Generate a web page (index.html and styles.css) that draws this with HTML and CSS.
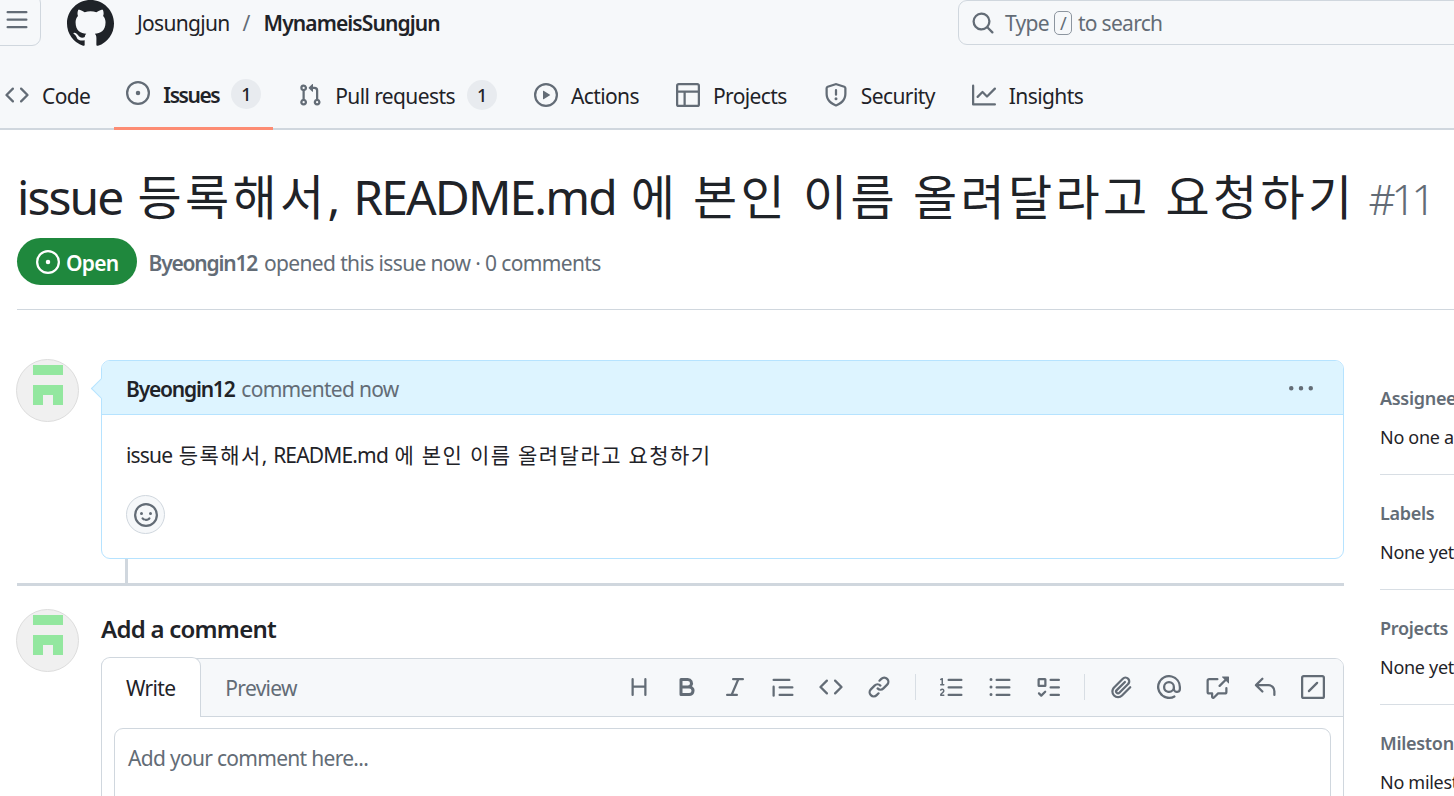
FILE: index.html
```html
<!DOCTYPE html>
<html lang="ko">
<head>
    <meta charset="UTF-8">
    <title>issue 등록해서, README.md 에 본인 이름 올려달라고 요청하기 #11</title>
    <link rel="stylesheet" href="styles.css">
</head>
<body>
    <svg class="sprite" xmlns="http://www.w3.org/2000/svg">
        <symbol id="i-bars" viewBox="0 0 16 16"><path d="M1 2.75A.75.75 0 0 1 1.75 2h12.5a.75.75 0 0 1 0 1.5H1.75A.75.75 0 0 1 1 2.75Zm0 5A.75.75 0 0 1 1.75 7h12.5a.75.75 0 0 1 0 1.5H1.75A.75.75 0 0 1 1 7.75ZM1.75 12h12.5a.75.75 0 0 1 0 1.5H1.75a.75.75 0 0 1 0-1.5Z"/></symbol>
        <symbol id="i-github" viewBox="0 0 16 16"><path d="M8 0c4.42 0 8 3.58 8 8a8.013 8.013 0 0 1-5.45 7.59c-.4.08-.55-.17-.55-.38 0-.27.01-1.13.01-2.2 0-.75-.25-1.23-.54-1.48 1.78-.2 3.65-.88 3.65-3.95 0-.88-.31-1.59-.82-2.15.08-.2.36-1.02-.08-2.12 0 0-.67-.22-2.2.82-.64-.18-1.32-.27-2-.27-.68 0-1.36.09-2 .27-1.53-1.03-2.2-.82-2.2-.82-.44 1.1-.16 1.92-.08 2.12-.51.56-.82 1.28-.82 2.15 0 3.06 1.86 3.75 3.64 3.95-.23.2-.44.55-.51 1.07-.46.21-1.61.55-2.33-.66-.15-.24-.6-.83-1.23-.82-.67.01-.27.38.01.53.34.19.73.9.82 1.13.16.45.68 1.31 2.69.94 0 .67.01 1.3.01 1.49 0 .21-.15.45-.55.38A7.995 7.995 0 0 1 0 8c0-4.42 3.58-8 8-8Z"/></symbol>
        <symbol id="i-search" viewBox="0 0 16 16"><path d="M10.68 11.74a6 6 0 0 1-7.922-8.982 6 6 0 0 1 8.982 7.922l3.04 3.04a.749.749 0 0 1-.326 1.275.749.749 0 0 1-.734-.215ZM11.5 7a4.499 4.499 0 1 0-8.997 0A4.499 4.499 0 0 0 11.5 7Z"/></symbol>
        <symbol id="i-code" viewBox="0 0 16 16"><path d="m11.28 3.22 4.25 4.25a.75.75 0 0 1 0 1.06l-4.25 4.25a.749.749 0 0 1-1.275-.326.749.749 0 0 1 .215-.734L13.94 8l-3.72-3.72a.749.749 0 0 1 .326-1.275.749.749 0 0 1 .734.215Zm-6.56 0a.751.751 0 0 1 1.042.018.751.751 0 0 1 .018 1.042L2.06 8l3.72 3.72a.749.749 0 0 1-.326 1.275.749.749 0 0 1-.734-.215L.47 8.53a.75.75 0 0 1 0-1.06Z"/></symbol>
        <symbol id="i-issue" viewBox="0 0 16 16"><path d="M8 9.5a1.5 1.5 0 1 0 0-3 1.5 1.5 0 0 0 0 3Z"/><path d="M8 0a8 8 0 1 1 0 16A8 8 0 0 1 8 0ZM1.5 8a6.5 6.5 0 1 0 13 0 6.5 6.5 0 0 0-13 0Z"/></symbol>
        <symbol id="i-pull" viewBox="0 0 16 16"><path d="M1.5 3.25a2.25 2.25 0 1 1 3 2.122v5.256a2.251 2.251 0 1 1-1.5 0V5.372A2.25 2.25 0 0 1 1.5 3.25Zm5.677-.177L9.573.677A.25.25 0 0 1 10 .854V2.5h1A2.5 2.5 0 0 1 13.5 5v5.628a2.251 2.251 0 1 1-1.5 0V5a1 1 0 0 0-1-1h-1v1.646a.25.25 0 0 1-.427.177L7.177 3.427a.25.25 0 0 1 0-.354ZM3.75 2.5a.75.75 0 1 0 0 1.5.75.75 0 0 0 0-1.5Zm0 9.5a.75.75 0 1 0 0 1.5.75.75 0 0 0 0-1.5Zm8.25.75a.75.75 0 1 0 1.5 0 .75.75 0 0 0-1.5 0Z"/></symbol>
        <symbol id="i-play" viewBox="0 0 16 16"><path d="M8 0a8 8 0 1 1 0 16A8 8 0 0 1 8 0ZM1.5 8a6.5 6.5 0 1 0 13 0 6.5 6.5 0 0 0-13 0Zm4.879-2.773 4.264 2.559a.25.25 0 0 1 0 .428l-4.264 2.559A.25.25 0 0 1 6 10.559V5.442a.25.25 0 0 1 .379-.215Z"/></symbol>
        <symbol id="i-table" viewBox="0 0 16 16"><path d="M0 1.75C0 .784.784 0 1.75 0h12.5C15.216 0 16 .784 16 1.75v12.5A1.75 1.75 0 0 1 14.25 16H1.75A1.75 1.75 0 0 1 0 14.25ZM6.5 6.5v8h7.75a.25.25 0 0 0 .25-.25V6.5Zm8-1.5V1.75a.25.25 0 0 0-.25-.25H1.75a.25.25 0 0 0-.25.25V5Zm-13 1.5v7.75c0 .138.112.25.25.25H5v-8Z"/></symbol>
        <symbol id="i-shield" viewBox="0 0 16 16"><path d="M7.467.133a1.748 1.748 0 0 1 1.066 0l5.25 1.68A1.75 1.75 0 0 1 15 3.48V7c0 1.566-.32 3.182-1.303 4.682-.983 1.498-2.585 2.813-5.032 3.855a1.697 1.697 0 0 1-1.33 0c-2.447-1.042-4.049-2.357-5.032-3.855C1.32 10.182 1 8.566 1 7V3.48a1.75 1.75 0 0 1 1.217-1.667Zm.61 1.429a.25.25 0 0 0-.153 0l-5.25 1.68a.25.25 0 0 0-.174.238V7c0 1.358.275 2.666 1.057 3.86.784 1.194 2.121 2.34 4.366 3.297a.196.196 0 0 0 .154 0c2.245-.956 3.582-2.104 4.366-3.298C13.225 9.666 13.5 8.36 13.5 7V3.48a.25.25 0 0 0-.174-.237l-5.25-1.68ZM8.75 4.75v3a.75.75 0 0 1-1.5 0v-3a.75.75 0 0 1 1.5 0ZM9 10.5a1 1 0 1 1-2 0 1 1 0 0 1 2 0Z"/></symbol>
        <symbol id="i-graph" viewBox="0 0 16 16"><path d="M1.5 1.75V13.5h13.75a.75.75 0 0 1 0 1.5H.75a.75.75 0 0 1-.75-.75V1.75a.75.75 0 0 1 1.5 0Zm14.28 2.53-5.25 5.25a.75.75 0 0 1-1.06 0L7 7.06 4.28 9.78a.751.751 0 0 1-1.042-.018.751.751 0 0 1-.018-1.042l3.25-3.25a.75.75 0 0 1 1.06 0L10 7.94l4.72-4.72a.751.751 0 0 1 1.042.018.751.751 0 0 1 .018 1.042Z"/></symbol>
        <symbol id="i-kebab" viewBox="0 0 16 16"><path d="M8 9a1.5 1.5 0 1 0 0-3 1.5 1.5 0 0 0 0 3ZM1.5 9a1.5 1.5 0 1 0 0-3 1.5 1.5 0 0 0 0 3Zm13 0a1.5 1.5 0 1 0 0-3 1.5 1.5 0 0 0 0 3Z"/></symbol>
        <symbol id="i-smiley" viewBox="0 0 16 16"><path d="M8 0a8 8 0 1 1 0 16A8 8 0 0 1 8 0ZM1.5 8a6.5 6.5 0 1 0 13 0 6.5 6.5 0 0 0-13 0Zm3.82 1.636a.75.75 0 0 1 1.038.175l.007.009c.103.118.22.222.35.31.264.178.683.37 1.285.37.602 0 1.02-.192 1.285-.371.13-.088.247-.192.35-.31l.007-.008a.75.75 0 0 1 1.222.87l-.022-.015c.02.013.021.015.021.015v.001l-.001.002-.002.003-.005.007-.014.019a2.066 2.066 0 0 1-.184.213c-.16.166-.338.316-.53.445-.63.418-1.37.638-2.127.629-.946 0-1.652-.308-2.126-.63a3.331 3.331 0 0 1-.715-.657l-.014-.02-.005-.006-.002-.003v-.002h-.001l.613-.432-.614.43a.75.75 0 0 1 .183-1.044ZM12 7a1 1 0 1 1-2 0 1 1 0 0 1 2 0ZM5 8a1 1 0 1 1 0-2 1 1 0 0 1 0 2Zm5.25 2.25.592.416a97.71 97.71 0 0 0-.592-.416Z"/></symbol>
        <symbol id="i-heading" viewBox="0 0 16 16"><path d="M3.75 2a.75.75 0 0 1 .75.75V7h7V2.75a.75.75 0 0 1 1.5 0v10.5a.75.75 0 0 1-1.5 0V8.5h-7v4.75a.75.75 0 0 1-1.5 0V2.75A.75.75 0 0 1 3.75 2Z"/></symbol>
        <symbol id="i-bold" viewBox="0 0 16 16"><path d="M4 2h4.5a3.501 3.501 0 0 1 2.852 5.53A3.499 3.499 0 0 1 9.5 14H4a1 1 0 0 1-1-1V3a1 1 0 0 1 1-1Zm1 7v3h4.5a1.5 1.5 0 0 0 0-3Zm3.5-2a1.5 1.5 0 0 0 0-3H5v3Z"/></symbol>
        <symbol id="i-italic" viewBox="0 0 16 16"><path d="M6 2.75A.75.75 0 0 1 6.75 2h6.5a.75.75 0 0 1 0 1.5h-2.505l-3.858 9H9.25a.75.75 0 0 1 0 1.5h-6.5a.75.75 0 0 1 0-1.5h2.505l3.858-9H6.75A.75.75 0 0 1 6 2.75Z"/></symbol>
        <symbol id="i-quote" viewBox="0 0 16 16"><path d="M1.75 2.5h10.5a.75.75 0 0 1 0 1.5H1.75a.75.75 0 0 1 0-1.5Zm4 5h8.5a.75.75 0 0 1 0 1.5h-8.5a.75.75 0 0 1 0-1.5Zm0 5h8.5a.75.75 0 0 1 0 1.5h-8.5a.75.75 0 0 1 0-1.5ZM2.5 7.75v6a.75.75 0 0 1-1.5 0v-6a.75.75 0 0 1 1.5 0Z"/></symbol>
        <symbol id="i-link" viewBox="0 0 16 16"><path d="m7.775 3.275 1.25-1.25a3.5 3.5 0 1 1 4.95 4.95l-2.5 2.5a3.5 3.5 0 0 1-4.95 0 .751.751 0 0 1 .018-1.042.751.751 0 0 1 1.042-.018 1.998 1.998 0 0 0 2.83 0l2.5-2.5a2.002 2.002 0 0 0-2.83-2.83l-1.25 1.25a.751.751 0 0 1-1.042-.018.751.751 0 0 1-.018-1.042Zm-4.69 9.64a1.998 1.998 0 0 0 2.83 0l1.25-1.25a.751.751 0 0 1 1.042.018.751.751 0 0 1 .018 1.042l-1.25 1.25a3.5 3.5 0 1 1-4.95-4.95l2.5-2.5a3.5 3.5 0 0 1 4.95 0 .751.751 0 0 1-.018 1.042.751.751 0 0 1-1.042.018 1.998 1.998 0 0 0-2.83 0l-2.5 2.5a1.998 1.998 0 0 0 0 2.83Z"/></symbol>
        <symbol id="i-ol" viewBox="0 0 16 16"><path d="M5 3.25a.75.75 0 0 1 .75-.75h8.5a.75.75 0 0 1 0 1.5h-8.5A.75.75 0 0 1 5 3.25Zm0 5a.75.75 0 0 1 .75-.75h8.5a.75.75 0 0 1 0 1.5h-8.5A.75.75 0 0 1 5 8.25Zm0 5a.75.75 0 0 1 .75-.75h8.5a.75.75 0 0 1 0 1.5h-8.5a.75.75 0 0 1-.75-.75ZM.924 10.32a.5.5 0 0 1-.851-.525l.001-.001.001-.002.002-.004.007-.011c.097-.144.215-.273.348-.384.228-.19.588-.392 1.068-.392.468 0 .858.181 1.126.484.259.294.377.673.377 1.038 0 .987-.686 1.495-1.156 1.845l-.047.035c-.303.225-.522.4-.654.597h1.357a.5.5 0 0 1 0 1H.5a.5.5 0 0 1-.5-.5c0-1.005.692-1.52 1.167-1.875l.035-.025c.531-.396.8-.625.8-1.078a.57.57 0 0 0-.128-.376C1.806 10.068 1.695 10 1.5 10a.658.658 0 0 0-.429.163.835.835 0 0 0-.144.153ZM2.003 2.5V6h.503a.5.5 0 0 1 0 1H.5a.5.5 0 0 1 0-1h.503V3.308l-.28.14a.5.5 0 0 1-.446-.895l1.003-.5a.5.5 0 0 1 .723.447Z"/></symbol>
        <symbol id="i-ul" viewBox="0 0 16 16"><path d="M5.75 2.5h8.5a.75.75 0 0 1 0 1.5h-8.5a.75.75 0 0 1 0-1.5Zm0 5h8.5a.75.75 0 0 1 0 1.5h-8.5a.75.75 0 0 1 0-1.5Zm0 5h8.5a.75.75 0 0 1 0 1.5h-8.5a.75.75 0 0 1 0-1.5ZM2 14a1 1 0 1 1 0-2 1 1 0 0 1 0 2Zm1-6a1 1 0 1 1-2 0 1 1 0 0 1 2 0ZM2 4a1 1 0 1 1 0-2 1 1 0 0 1 0 2Z"/></symbol>
        <symbol id="i-task" viewBox="0 0 16 16"><path fill-rule="evenodd" d="M2 2h4a1 1 0 0 1 1 1v4a1 1 0 0 1-1 1H2a1 1 0 0 1-1-1V3a1 1 0 0 1 1-1Zm4.655 8.595a.75.75 0 0 1 0 1.06L4.03 14.28a.75.75 0 0 1-1.06 0l-1.5-1.5a.749.749 0 0 1 .326-1.275.749.749 0 0 1 .734.215l.97.97 2.095-2.095a.75.75 0 0 1 1.06 0ZM9.75 2.5h5.5a.75.75 0 0 1 0 1.5h-5.5a.75.75 0 0 1 0-1.5Zm0 5h5.5a.75.75 0 0 1 0 1.5h-5.5a.75.75 0 0 1 0-1.5Zm0 5h5.5a.75.75 0 0 1 0 1.5h-5.5a.75.75 0 0 1 0-1.5Zm-7.25-9v3h3v-3Z"/></symbol>
        <symbol id="i-clip" viewBox="0 0 16 16"><path d="M12.212 3.02a1.753 1.753 0 0 0-2.478.003l-5.83 5.83a3.007 3.007 0 0 0-.88 2.127c0 .795.315 1.551.88 2.116.567.567 1.333.89 2.126.89.79 0 1.548-.321 2.116-.89l5.48-5.48a.75.75 0 0 1 1.061 1.06l-5.48 5.48a4.492 4.492 0 0 1-3.177 1.33c-1.2 0-2.345-.487-3.187-1.33a4.483 4.483 0 0 1-1.32-3.177c0-1.195.475-2.341 1.32-3.186l5.83-5.83a3.25 3.25 0 0 1 5.553 2.297c0 .863-.343 1.691-.953 2.301L7.439 12.39c-.375.377-.884.59-1.416.593a1.998 1.998 0 0 1-1.412-.587 1.992 1.992 0 0 1 0-2.828l5.48-5.48a.751.751 0 0 1 1.042.018.751.751 0 0 1 .018 1.042l-5.48 5.48a.492.492 0 0 0 0 .707.499.499 0 0 0 .352.148.51.51 0 0 0 .356-.148l5.833-5.827a1.755 1.755 0 0 0 0-2.481Z"/></symbol>
        <symbol id="i-mention" viewBox="0 0 16 16"><path d="M4.75 2.37a6.501 6.501 0 0 0 6.5 11.26.75.75 0 0 1 .75 1.298A7.999 7.999 0 0 1 .989 4.148 8 8 0 0 1 16 8v1.25a2.75 2.75 0 0 1-5.072 1.475A3.999 3.999 0 0 1 4 8a4 4 0 0 1 8 0v1.25a1.25 1.25 0 0 0 2.5 0V8a6.5 6.5 0 0 0-9.75-5.63ZM10.5 8a2.5 2.5 0 1 0-5 0 2.5 2.5 0 0 0 5 0Z"/></symbol>
        <symbol id="i-xref" viewBox="0 0 16 16"><path d="M2.75 3.5a.25.25 0 0 0-.25.25v7.5c0 .138.112.25.25.25h2a.75.75 0 0 1 .75.75v2.19l2.72-2.72a.749.749 0 0 1 .53-.22h4.5a.25.25 0 0 0 .25-.25v-2.5a.75.75 0 0 1 1.5 0v2.5A1.75 1.75 0 0 1 13.25 13H9.06l-2.573 2.573A1.458 1.458 0 0 1 4 14.543V13H2.75A1.75 1.75 0 0 1 1 11.25v-7.5C1 2.784 1.784 2 2.75 2h5.5a.75.75 0 0 1 0 1.5ZM16 1.25v4.146a.25.25 0 0 1-.427.177L14.03 4.03l-3.75 3.75a.749.749 0 0 1-1.275-.326.749.749 0 0 1 .215-.734l3.75-3.75-1.543-1.543A.25.25 0 0 1 11.604 1h4.146a.25.25 0 0 1 .25.25Z"/></symbol>
        <symbol id="i-reply" viewBox="0 0 16 16"><path d="M6.78 1.97a.75.75 0 0 1 0 1.06L3.81 6h6.44A4.75 4.75 0 0 1 15 10.75v2.5a.75.75 0 0 1-1.5 0v-2.5a3.25 3.25 0 0 0-3.25-3.25H3.81l2.97 2.97a.749.749 0 0 1-.326 1.275.749.749 0 0 1-.734-.215L1.47 7.28a.75.75 0 0 1 0-1.06l4.25-4.25a.75.75 0 0 1 1.06 0Z"/></symbol>
        <symbol id="i-slash" viewBox="0 0 16 16"><path d="M0 1.75C0 .784.784 0 1.75 0h12.5C15.216 0 16 .784 16 1.75v12.5A1.75 1.75 0 0 1 14.25 16H1.75A1.75 1.75 0 0 1 0 14.25Zm1.75-.25a.25.25 0 0 0-.25.25v12.5c0 .138.112.25.25.25h12.5a.25.25 0 0 0 .25-.25V1.75a.25.25 0 0 0-.25-.25Z"/><path d="M11.28 4.72a.75.75 0 0 1 0 1.06l-5.5 5.5a.75.75 0 0 1-1.06-1.06l5.5-5.5a.75.75 0 0 1 1.06 0Z"/></symbol>
        <symbol id="i-avatar" viewBox="0 0 30 40"><path d="M0 0h30v10H0ZM0 20h30v20H20V30H10v10H0Z"/></symbol>
    </svg>

    <header class="repo-head">
        <div class="topbar">
            <button class="menu-btn"><svg class="icon"><use href="#i-bars"/></svg></button>
            <svg class="logo"><use href="#i-github"/></svg>
            <div class="crumbs">
                <span>Josungjun</span>
                <span class="crumb-sep">/</span>
                <strong>MynameisSungjun</strong>
            </div>
            <div class="search">
                <svg class="icon"><use href="#i-search"/></svg>
                <span>Type</span><kbd>/</kbd><span>to search</span>
            </div>
        </div>
        <nav class="tabs">
            <a class="tab tab-first"><svg class="icon"><use href="#i-code"/></svg>Code</a>
            <a class="tab tab-active"><svg class="icon"><use href="#i-issue"/></svg><b>Issues</b><span class="counter">1</span></a>
            <a class="tab"><svg class="icon"><use href="#i-pull"/></svg>Pull requests<span class="counter">1</span></a>
            <a class="tab"><svg class="icon"><use href="#i-play"/></svg>Actions</a>
            <a class="tab"><svg class="icon"><use href="#i-table"/></svg>Projects</a>
            <a class="tab"><svg class="icon"><use href="#i-shield"/></svg>Security</a>
            <a class="tab"><svg class="icon"><use href="#i-graph"/></svg>Insights</a>
        </nav>
    </header>

    <main class="page">
        <div class="issue-head">
            <h1 class="issue-title">issue <span class="ko">등록해서</span>, README.md <span class="ko">에</span> <span class="ko">본인</span> <span class="ko">이름</span> <span class="ko">올려달라고</span> <span class="ko">요청하기</span> <span class="issue-num">#11</span></h1>
            <div class="issue-meta">
                <span class="state"><svg class="icon"><use href="#i-issue"/></svg>Open</span>
                <span class="meta-text"><b>Byeongin12</b> opened this issue now · 0 comments</span>
            </div>
        </div>

        <div class="issue-body">
            <div class="discussion">
                <div class="comment-row">
                    <div class="avatar"><svg><use href="#i-avatar"/></svg></div>
                    <div class="comment">
                        <div class="comment-head">
                            <span><b>Byeongin12</b> <span class="muted">commented now</span></span>
                            <svg class="icon"><use href="#i-kebab"/></svg>
                        </div>
                        <div class="comment-body">
                            <p>issue <span class="ko">등록해서</span>, README.md <span class="ko">에</span> <span class="ko">본인</span> <span class="ko">이름</span> <span class="ko">올려달라고</span> <span class="ko">요청하기</span></p>
                            <button class="react"><svg class="icon"><use href="#i-smiley"/></svg></button>
                        </div>
                    </div>
                </div>
                <div class="thread-line"></div>

                <div class="comment-row add-row">
                    <div class="avatar"><svg><use href="#i-avatar"/></svg></div>
                    <div class="add-comment">
                        <h2>Add a comment</h2>
                        <div class="editor">
                            <div class="editor-head">
                                <span class="editor-tab editor-tab-on">Write</span>
                                <span class="editor-tab">Preview</span>
                                <div class="toolbar">
                                    <svg class="tool"><use href="#i-heading"/></svg>
                                    <svg class="tool"><use href="#i-bold"/></svg>
                                    <svg class="tool"><use href="#i-italic"/></svg>
                                    <svg class="tool"><use href="#i-quote"/></svg>
                                    <svg class="tool"><use href="#i-code"/></svg>
                                    <svg class="tool"><use href="#i-link"/></svg>
                                    <span class="tool-sep"></span>
                                    <svg class="tool"><use href="#i-ol"/></svg>
                                    <svg class="tool"><use href="#i-ul"/></svg>
                                    <svg class="tool"><use href="#i-task"/></svg>
                                    <span class="tool-sep"></span>
                                    <svg class="tool"><use href="#i-clip"/></svg>
                                    <svg class="tool"><use href="#i-mention"/></svg>
                                    <svg class="tool"><use href="#i-xref"/></svg>
                                    <svg class="tool"><use href="#i-reply"/></svg>
                                    <svg class="tool"><use href="#i-slash"/></svg>
                                </div>
                            </div>
                            <div class="editor-body">
                                <div class="textbox">Add your comment here...</div>
                            </div>
                        </div>
                    </div>
                </div>
            </div>

            <aside class="sidebar">
                <section class="side-item"><h3>Assignees</h3><p>No one assigned</p></section>
                <section class="side-item"><h3>Labels</h3><p>None yet</p></section>
                <section class="side-item"><h3>Projects</h3><p>None yet</p></section>
                <section class="side-item"><h3>Milestone</h3><p>No milestone</p></section>
            </aside>
        </div>
    </main>
</body>
</html>
```

FILE: styles.css
```css
html, body {
    margin: 0;
    height: 796px;
    overflow: hidden;
}

body {
    font-family: "Noto Sans", "Noto Sans CJK KR", sans-serif;
    font-size: 21px;
    letter-spacing: -0.7px;
    color: #1f2328;
    background: #fff;
}

b {
    font-weight: 600;
    letter-spacing: -1.2px;
}

strong {
    font-weight: 600;
    letter-spacing: -0.9px;
}

h1, h2, h3, p {
    margin: 0;
    font-weight: 400;
}

.sprite {
    display: none;
}

/* hangul runs are set a little wider, the latin font is squeezed instead */
.ko {
    letter-spacing: 0.07em;
}

.icon {
    width: 24px;
    height: 24px;
    flex: none;
    fill: #636c76;
}

/* header */
.repo-head {
    background: #f6f8fa;
    border-bottom: 2px solid #d0d7de;
    height: 128px;
}

.topbar {
    display: flex;
    align-items: center;
    height: 46px;
    white-space: nowrap;
}

.menu-btn {
    display: flex;
    align-items: center;
    justify-content: center;
    align-self: flex-end;
    width: 50px;
    height: 52px;
    margin-left: -9px;
    padding: 0 0 0 2px;
    background: #f6f8fa;
    border: 1px solid #d0d7de;
    border-radius: 9px;
}

.logo {
    width: 47px;
    height: 47px;
    flex: none;
    margin-left: 26px;
    fill: #1f2328;
}

.crumbs {
    display: flex;
    margin-left: 23px;
}

.crumb-sep {
    margin: 0 14px 0 13px;
    color: #636c76;
}

.search {
    display: flex;
    align-items: center;
    align-self: flex-start;
    width: 600px;
    height: 45px;
    margin-left: auto;
    margin-right: -104px;
    padding-left: 12px;
    box-sizing: border-box;
    color: #636c76;
    border: 1px solid #d0d7de;
    border-radius: 9px;
}

.search > span:first-of-type {
    margin-left: 10px;
}

.search kbd {
    width: 18px;
    height: 24px;
    margin: 0 6px 0 5px;
    font: inherit;
    font-size: 18px;
    line-height: 22px;
    text-align: center;
    box-sizing: border-box;
    border: 1px solid #8c959f;
    border-radius: 5px;
}

.tabs {
    display: flex;
    gap: 13px;
    height: 56px;
    margin: 26px 0 0 -7px;
    white-space: nowrap;
    letter-spacing: -0.6px;
}

.tab {
    display: flex;
    align-items: center;
    height: 56px;
    padding: 0 12px 8px;
    box-sizing: border-box;
}

.tab-first {
    padding-right: 11px;
}

.tab .icon {
    margin: -3px 13px 0 0;
}

.tab b {
    letter-spacing: -1.45px;
}

.tab-active {
    height: 58px;
    padding-bottom: 10px;
    border-bottom: 3px solid #fd8c73;
}

.counter {
    width: 30px;
    height: 30px;
    margin: -2px 0 0 12px;
    font-size: 18px;
    font-weight: 500;
    line-height: 30px;
    text-align: center;
    background: #e8ebef;
    border-radius: 50%;
}

/* issue title */
.page {
    padding-left: 17px;
}

.issue-head {
    height: 180px;
    border-bottom: 1px solid #d0d7de;
    box-sizing: border-box;
    padding-top: 34px;
    white-space: nowrap;
}

.issue-title {
    font-size: 48px;
    line-height: 66px;
    letter-spacing: -0.04em;
    word-spacing: 0.09em;
}

.issue-num {
    margin-left: -2px;
    font-size: 42px;
    font-weight: 300;
    letter-spacing: -4px;
    color: #636c76;
}

.issue-meta {
    display: flex;
    align-items: center;
    gap: 12px;
    margin-top: 6px;
    color: #636c76;
}

.state {
    display: flex;
    align-items: center;
    gap: 6px;
    height: 47px;
    padding: 2px 18px 0 19px;
    box-sizing: border-box;
    font-weight: 600;
    color: #fff;
    background: #1f883d;
    border-radius: 24px;
}

.state .icon {
    margin-top: -2px;
    fill: #fff;
}

.meta-text {
    padding-top: 2px;
    letter-spacing: -0.63px;
}

.meta-text b,
.comment-head b {
    margin-right: 2px;
}

/* discussion */
.issue-body {
    display: flex;
    align-items: flex-start;
    padding-top: 49px;
}

.discussion {
    width: 1327px;
    flex: none;
}

.comment-row {
    display: flex;
    align-items: flex-start;
}

.avatar {
    display: flex;
    justify-content: center;
    width: 63px;
    height: 63px;
    flex: none;
    margin-left: -1px;
    padding-top: 5px;
    box-sizing: border-box;
    background: #f0f0f0;
    border: 1px solid #ddd;
    border-radius: 50%;
}

.avatar svg {
    width: 30px;
    height: 40px;
    fill: #93e79f;
}

.comment {
    position: relative;
    flex: 1;
    height: 199px;
    margin: 1px 0 0 22px;
    box-sizing: border-box;
    border: 1px solid #b6e3ff;
    border-radius: 9px;
}

/* little arrow pointing at the avatar */
.comment::before {
    content: "";
    position: absolute;
    top: 20px;
    left: -8px;
    width: 14px;
    height: 14px;
    background: #ddf4ff;
    border-left: 1px solid #b6e3ff;
    border-bottom: 1px solid #b6e3ff;
    transform: rotate(45deg);
}

.comment-head {
    display: flex;
    align-items: center;
    justify-content: space-between;
    height: 54px;
    padding: 2px 30px 0 24px;
    box-sizing: border-box;
    background: #ddf4ff;
    border-bottom: 1px solid #b6e3ff;
    border-radius: 8px 8px 0 0;
}

.muted {
    color: #636c76;
}

.comment-body {
    padding: 24px;
}

.comment-body p {
    line-height: 32px;
    letter-spacing: -0.04em;
    word-spacing: 0.09em;
}

.react {
    display: flex;
    align-items: center;
    justify-content: center;
    width: 39px;
    height: 39px;
    margin-top: 24px;
    padding: 0;
    background: #f6f8fa;
    border: 1px solid #d0d7de;
    border-radius: 50%;
}

.thread-line {
    width: 3px;
    height: 24px;
    margin-left: 108px;
    background: #d0d7de;
}

.add-row {
    padding-top: 23px;
    border-top: 3px solid #d0d7de;
}

.add-comment {
    flex: 1;
    margin-left: 22px;
}

.add-comment h2 {
    margin-top: -1px;
    font-size: 24px;
    font-weight: 600;
    line-height: 42px;
    letter-spacing: -0.75px;
}

.editor {
    margin-top: 8px;
    height: 300px;
    border: 1px solid #d0d7de;
    border-radius: 9px;
}

.editor-head {
    display: flex;
    align-items: flex-end;
    height: 57px;
    background: #f6f8fa;
    border-bottom: 1px solid #d0d7de;
    border-radius: 8px 8px 0 0;
}

.editor-tab {
    display: flex;
    align-items: center;
    height: 57px;
    padding: 0 24px;
    color: #636c76;
}

.editor-tab-on {
    height: 59px;
    margin: -1px 0 -1px -1px;
    padding-right: 25px;
    color: #1f2328;
    background: #fff;
    border: 1px solid #d0d7de;
    border-bottom: 0;
    border-radius: 9px 9px 0 0;
}

.toolbar {
    display: flex;
    align-items: center;
    align-self: center;
    margin: -2px 6px 0 auto;
}

.tool {
    width: 24px;
    height: 24px;
    padding: 0 12px;
    fill: #636c76;
}

.tool-sep {
    width: 1px;
    height: 26px;
    margin: 0 12px;
    background: #d8dee4;
}

.editor-body {
    padding: 11px 12px 12px;
}

.textbox {
    height: 200px;
    padding: 13px;
    line-height: 32px;
    color: #636c76;
    border: 1px solid #d0d7de;
    border-radius: 9px;
}

/* sidebar */
.sidebar {
    width: 300px;
    flex: none;
    margin: 1px 0 0 36px;
    white-space: nowrap;
    letter-spacing: -0.3px;
}

.side-item {
    height: 115px;
    padding-top: 24px;
    box-sizing: border-box;
    border-bottom: 1px solid #d8dee4;
    font-size: 18px;
}

.side-item h3 {
    font-size: 18px;
    font-weight: 600;
    line-height: 28px;
    color: #636c76;
}

.side-item p {
    margin-top: 11px;
    line-height: 28px;
}
```
